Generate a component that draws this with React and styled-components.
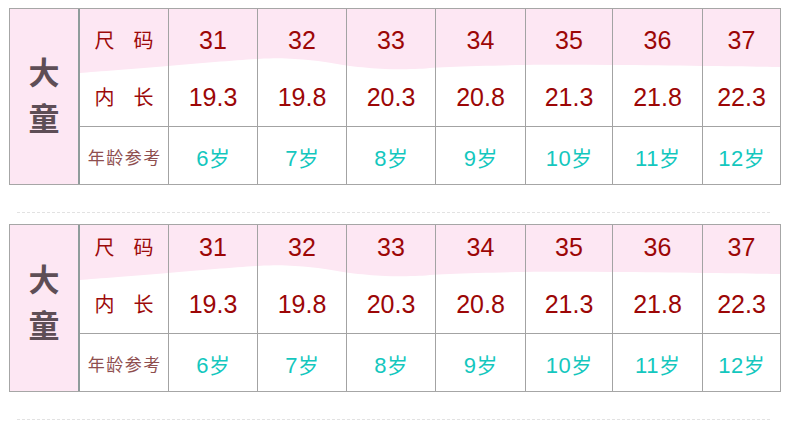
import React from 'react';
import styled, { createGlobalStyle } from 'styled-components';

const GlobalStyle = createGlobalStyle`
  html, body {
    margin: 0;
    padding: 0;
    background: #ffffff;
  }
  body {
    font-family: "Liberation Sans", "Noto Sans CJK SC", sans-serif;
  }
`;

const PINK = '#fde7f3';
const COLS = '89px 89px 89px 89px 90px 87px 90px 77px';

const sizes = ['31', '32', '33', '34', '35', '36', '37'];
const lengths = ['19.3', '19.8', '20.3', '20.8', '21.3', '21.8', '22.3'];
const ages = ['6', '7', '8', '9', '10', '11', '12'];

// wave edge of the pink header, dy relative to bottom of the size row
const wavePts = [
  [0, 6], [88, -1], [178, -8], [215, -8], [245, -5], [270, -1],
  [305, 2], [335, 2], [370, 0], [445, -2], [532, -2], [622, -1], [700, 0],
];

function wavePath(r) {
  const p = wavePts.map(([x, dy]) => [x, r + dy]);
  const last = p[p.length - 1];
  let d = `M0 0 H700 V${last[1]}`;
  // walk back right to left with catmull-rom curves
  const q = [...p].reverse();
  for (let i = 0; i < q.length - 1; i++) {
    const p0 = q[i - 1] || q[i];
    const p1 = q[i];
    const p2 = q[i + 1];
    const p3 = q[i + 2] || p2;
    const c1 = [p1[0] + (p2[0] - p0[0]) / 6, p1[1] + (p2[1] - p0[1]) / 6];
    const c2 = [p2[0] - (p3[0] - p1[0]) / 6, p2[1] - (p3[1] - p1[1]) / 6];
    d += ` C${c1[0]} ${c1[1]} ${c2[0]} ${c2[1]} ${p2[0]} ${p2[1]}`;
  }
  return d + ' Z';
}

const Page = styled.div`
  padding: 8px 0 0 9px;
`;

const Table = styled.div`
  display: flex;
  width: 772px;
  box-sizing: border-box;
  border: 1px solid #a6a6a6;
`;

const Side = styled.div`
  width: 70px;
  box-sizing: border-box;
  flex-shrink: 0;
  background: ${PINK};
  border-right: 2px solid #8f9c9b;
  display: flex;
  flex-direction: column;
  align-items: center;
  justify-content: flex-end;
  padding-bottom: 44px;
  font-family: "Noto Sans CJK SC", sans-serif;
  font-size: 31px;
  font-weight: 700;
  line-height: 46px;
  color: #5e4e56;
`;

const Body = styled.div`
  position: relative;
  flex: 1;
`;

const Wave = styled.svg`
  position: absolute;
  top: 0;
  left: 0;
  display: block;
`;

const Row = styled.div`
  position: relative;
  display: grid;
  grid-template-columns: ${COLS};
  grid-template-rows: minmax(0, 1fr);
  height: ${(p) => p.$h}px;
  box-sizing: border-box;
  border-bottom: ${(p) => (p.$line ? '1px solid #a3a3a3' : 'none')};
`;

const Cell = styled.div`
  display: flex;
  justify-content: center;
  align-items: ${(p) => p.$align || 'center'};
  min-height: 0;
  padding-top: ${(p) => p.$pt || 0}px;
  border-right: 1px solid #a3a3a3;
  box-sizing: border-box;
  &:last-child {
    border-right: none;
  }
`;

const Num = styled.span`
  font-family: "Liberation Sans", Arial, sans-serif;
  font-size: 25px;
  line-height: 54px;
  color: #9c0606;
`;

const Label = styled.span`
  display: flex;
  gap: 19px;
  font-family: "Noto Sans CJK SC", sans-serif;
  font-size: 20px;
  line-height: 54px;
  color: #9c0a0a;
`;

const AgeLabel = styled.span`
  font-family: "Noto Sans CJK SC", sans-serif;
  font-size: 17px;
  letter-spacing: 1.5px;
  margin-right: -1.5px;
  color: #8e4e4e;
`;

const Age = styled.span`
  font-family: "Liberation Sans", "Noto Sans CJK SC", sans-serif;
  font-size: 22px;
  letter-spacing: 0.5px;
  color: #14c7be;
  & > i {
    font-style: normal;
    font-family: "Noto Sans CJK SC", sans-serif;
    font-size: 21px;
    letter-spacing: 0;
  }
`;

const Divider = styled.div`
  width: 753px;
  height: 1px;
  margin: 27px 0 11px 8px;
  background: repeating-linear-gradient(90deg, #e2e2e2 0 3px, transparent 3px 5px);
`;

function SizeTable({ headH }) {
  return (
    <Table>
      <Side>
        <span>大</span>
        <span>童</span>
      </Side>
      <Body>
        <Wave width="700" height={headH + 12} viewBox={`0 0 700 ${headH + 12}`}>
          <path d={wavePath(headH)} fill={PINK} />
        </Wave>
        <Row $h={headH}>
          <Cell $align="flex-end">
            <Label><span>尺</span><span>码</span></Label>
          </Cell>
          {sizes.map((s) => (
            <Cell key={s} $align="flex-end"><Num>{s}</Num></Cell>
          ))}
        </Row>
        <Row $h={60} $line>
          <Cell>
            <Label><span>内</span><span>长</span></Label>
          </Cell>
          {lengths.map((l) => (
            <Cell key={l}><Num>{l}</Num></Cell>
          ))}
        </Row>
        <Row $h={57}>
          <Cell $pt={2}><AgeLabel>年龄参考</AgeLabel></Cell>
          {ages.map((a) => (
            <Cell key={a} $pt={2}><Age>{a}<i>岁</i></Age></Cell>
          ))}
        </Row>
      </Body>
    </Table>
  );
}

export default function App() {
  return (
    <Page>
      <GlobalStyle />
      <SizeTable headH={58} />
      <Divider />
      <SizeTable headH={49} />
      <Divider />
    </Page>
  );
}
